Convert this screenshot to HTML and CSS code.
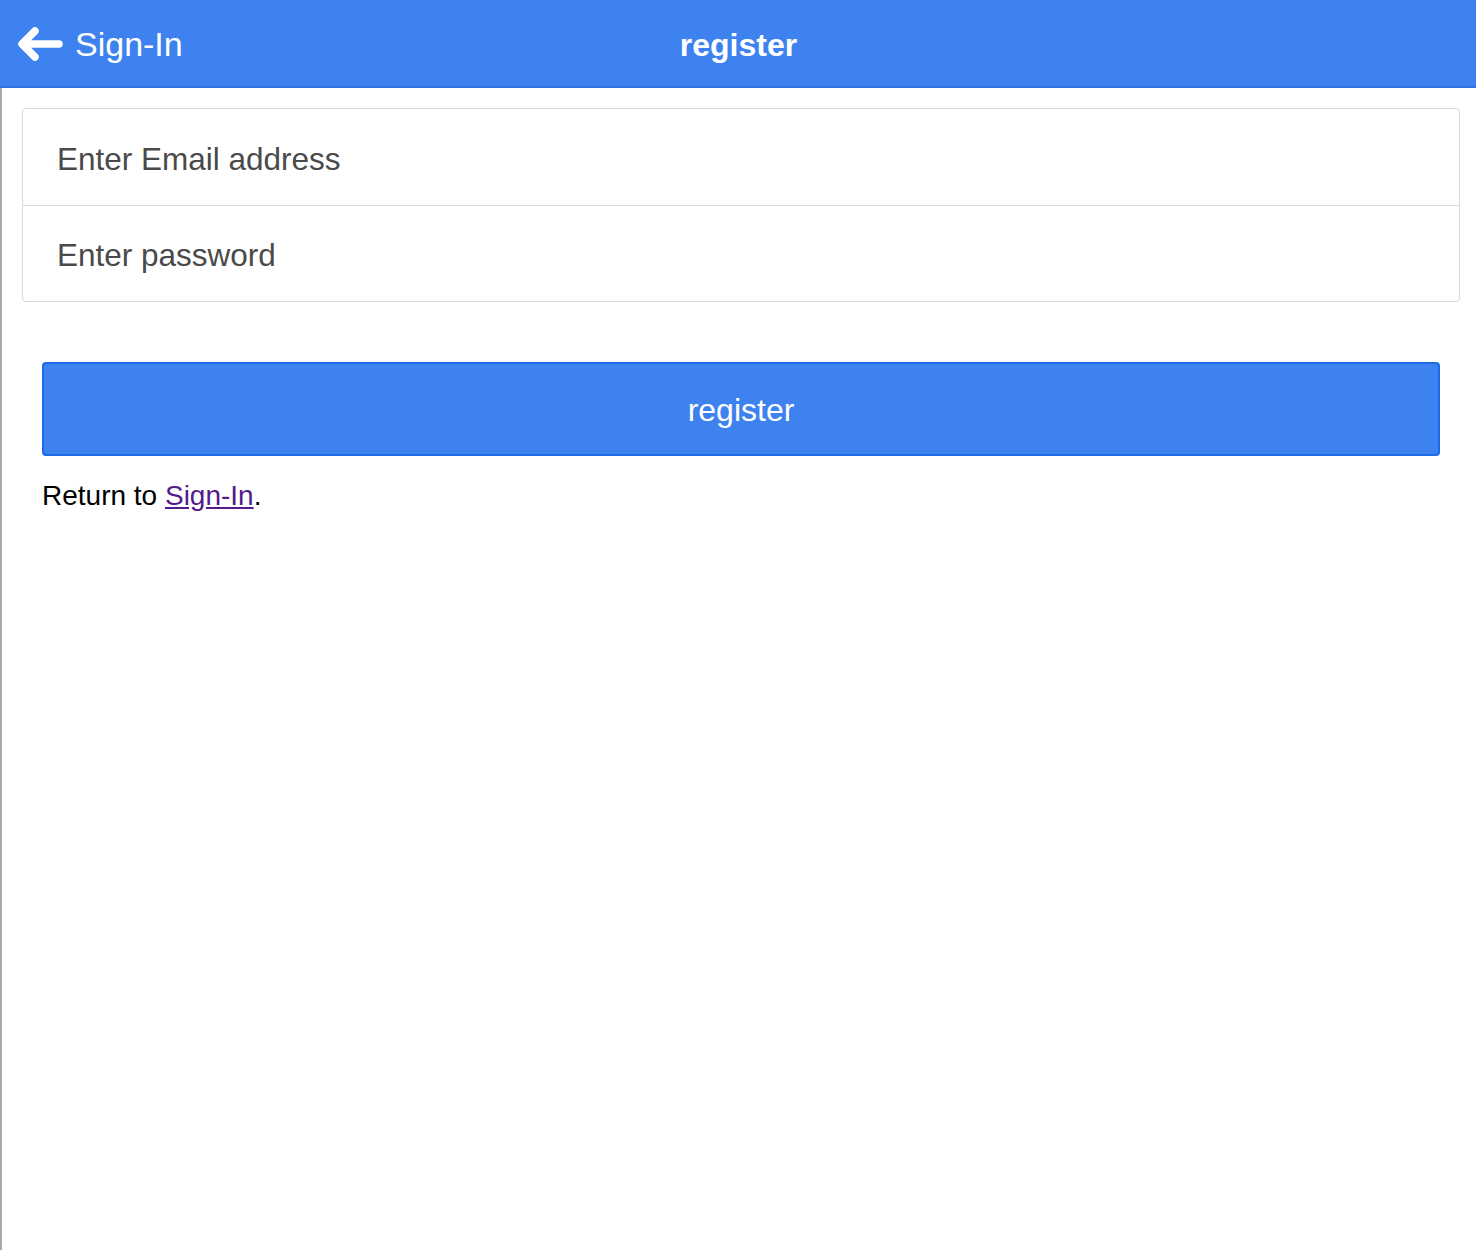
FILE: index.html
```html
<!DOCTYPE html>
<html>
<head>
<meta charset="utf-8">
<link rel="stylesheet" href="styles.css">
</head>
<body>
<header class="bar">
  <a class="back" href="#">
    <svg class="back-icon" width="46" height="36" viewBox="0 0 46 36" fill="none" stroke="#fff" stroke-width="7.5" stroke-linecap="round" stroke-linejoin="round">
      <path d="M41 17H5M17 4L4 17L17 30"/>
    </svg>
    <span>Sign-In</span>
  </a>
  <h1 class="title">register</h1>
</header>
<main class="content">
  <div class="list">
    <label class="item"><input type="email" placeholder="Enter Email address"></label>
    <label class="item"><input type="password" placeholder="Enter password"></label>
  </div>
  <div class="padded">
    <button class="btn">register</button>
    <p class="note">Return to <a href="#">Sign-In</a>.</p>
  </div>
</main>
</body>
</html>
```
FILE: styles.css
```css
html, body {
  margin: 0;
  padding: 0;
  background: #fff;
  font-family: "Liberation Sans", Arial, sans-serif;
}
.bar {
  height: 86px;
  background: #3e82f0;
  border-bottom: 2px solid #2f74e6;
  position: relative;
  display: flex;
  align-items: center;
  justify-content: center;
}
.back {
  position: absolute;
  left: 18px;
  top: 0;
  height: 86px;
  display: flex;
  align-items: center;
  color: #fff;
  text-decoration: none;
  font-size: 34px;
}
.back-icon {
  margin-right: 11px;
  margin-top: 3px;
}
.back span {
  margin-top: 3px;
}
.title {
  margin: 0;
  color: #fff;
  font-size: 32px;
  font-weight: bold;
  margin-top: 4px;
  margin-left: 1px;
}
.content {
  border-left: 2px solid #a8a8a8;
  min-height: 1162px;
  padding: 20px 16px 0 20px;
}
.list {
  border: 1px solid #d9d9d9;
  border-radius: 4px;
  background: #fff;
}
.item {
  display: block;
  height: 96px;
}
.item + .item {
  border-top: 1px solid #d9d9d9;
  height: 95px;
}
.item input {
  width: 100%;
  height: 100%;
  box-sizing: border-box;
  border: 0;
  outline: none;
  padding: 4px 0 0 34px;
  font-family: "Liberation Sans", Arial, sans-serif;
  font-size: 31.5px;
  background: transparent;
  color: #444;
}
.item input::placeholder {
  color: #4a4a4a;
  opacity: 1;
}
.padded {
  padding: 60px 20px 0 20px;
}
.btn {
  display: block;
  width: 100%;
  height: 94px;
  border: 2px solid #1c6ae6;
  border-radius: 4px;
  background: #3e82f0;
  color: #fff;
  font-family: "Liberation Sans", Arial, sans-serif;
  font-size: 32px;
  padding: 2px 0 0 0;
}
.note {
  margin: 24px 0 0 0;
  font-size: 28px;
  color: #000;
}
.note a {
  color: #551a8b;
}
```
